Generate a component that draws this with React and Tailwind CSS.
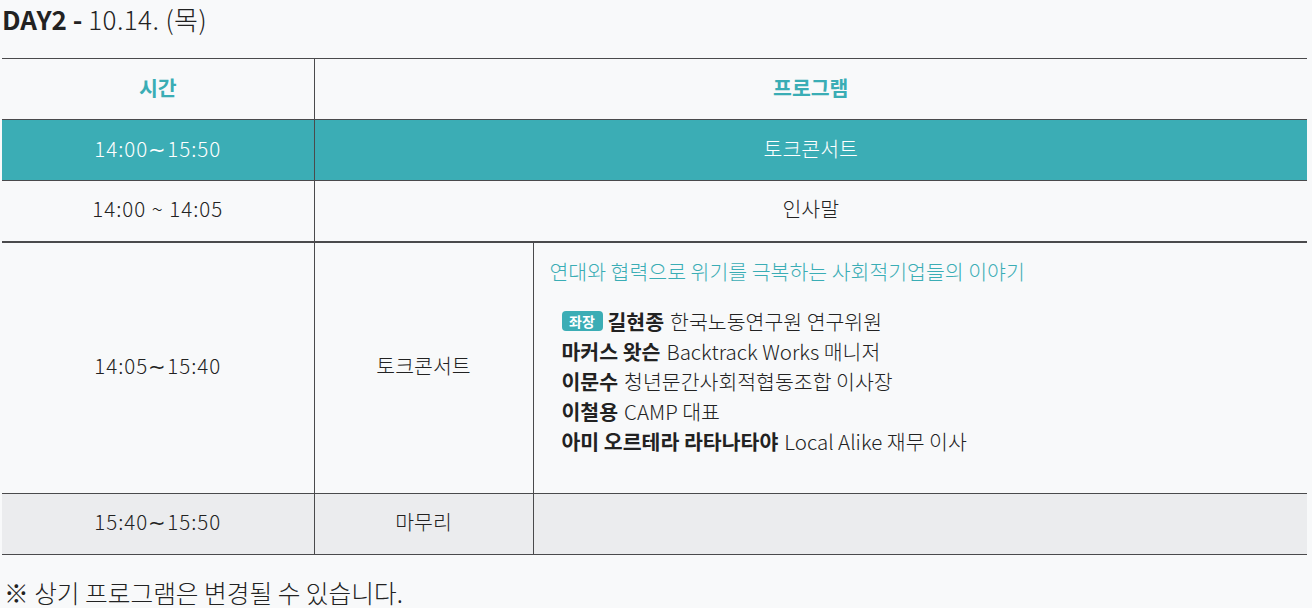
const font = { fontFamily: '"Noto Sans CJK KR", "Noto Sans", sans-serif' };

const speakers = [
  { name: "길현종", role: "한국노동연구원 연구위원", chair: true },
  { name: "마커스 왓슨", role: "Backtrack Works 매니저" },
  { name: "이문수", role: "청년문간사회적협동조합 이사장" },
  { name: "이철용", role: "CAMP 대표" },
  { name: "아미 오르테라 라타나타야", role: "Local Alike 재무 이사" },
];

export default function App() {
  return (
    <div
      className="min-h-[608px] w-[1312px] bg-[#f8f9fa] text-[#222] overflow-hidden"
      style={font}
    >
      {/* Title */}
      <h2 className="h-[58px] pl-[2px] text-[26px] leading-[38px]">
        <span className="font-bold">DAY2 - </span>
        <span className="font-light tracking-[0.4px]">10.14. (목)</span>
      </h2>

      <table className="ml-[2px] w-[1305px] table-fixed border-collapse text-[20.5px]">
        <colgroup>
          <col className="w-[312px]" />
          <col className="w-[219px]" />
          <col />
        </colgroup>
        <thead>
          <tr className="border-t border-[#4a4a4c]">
            <th className="h-[61px] border-r border-[#4a4a4c] pb-1 text-center font-bold text-[#3aadb5]">
              시간
            </th>
            <th colSpan={2} className="h-[61px] pb-1 text-center font-bold text-[#3aadb5]">
              프로그램
            </th>
          </tr>
        </thead>
        <tbody className="font-light">
          <tr className="border-t border-[#4a4a4c] bg-[#3badb5] text-white">
            <td className="h-[61px] border-r border-[#4a4a4c] pb-1 text-center tracking-[1px]">
              14:00∼15:50
            </td>
            <td colSpan={2} className="pb-1 text-center">
              토크콘서트
            </td>
          </tr>
          <tr className="border-t border-b-2 border-[#4a4a4c]">
            <td className="h-[61px] border-r border-[#4a4a4c] pb-1 text-center tracking-[1px]">
              14:00 ~ 14:05
            </td>
            <td colSpan={2} className="pb-1 text-center">
              인사말
            </td>
          </tr>
          <tr className="border-[#4a4a4c]">
            <td className="h-[250px] border-r border-[#4a4a4c] pb-1 text-center tracking-[1px]">
              14:05∼15:40
            </td>
            <td className="border-r border-[#4a4a4c] pb-1 text-center">토크콘서트</td>
            <td className="px-4 pt-[13px] pb-[37px] align-top">
              <p className="leading-[30px] text-[#3aadb5]">
                연대와 협력으로 위기를 극복하는 사회적기업들의 이야기
              </p>
              <ul className="mt-[20px] pl-3">
                {speakers.map((s) => (
                  <li key={s.name} className="flex items-center leading-[30px]">
                    {s.chair && (
                      <span className="mr-[5px] inline-flex h-5 w-[41px] items-center justify-center rounded-[4px] bg-[#3badb5] text-[14px] font-bold leading-none text-white">
                        좌장
                      </span>
                    )}
                    <span className="font-bold">{s.name}</span>
                    <span className="ml-[6px]">{s.role}</span>
                  </li>
                ))}
              </ul>
            </td>
          </tr>
          <tr className="border-t border-b border-[#4a4a4c] bg-[#ebecee]">
            <td className="h-[61px] border-r border-[#4a4a4c] pb-1 text-center tracking-[1px]">
              15:40∼15:50
            </td>
            <td className="border-r border-[#4a4a4c] pb-1 text-center">마무리</td>
            <td></td>
          </tr>
        </tbody>
      </table>

      <p className="mt-[20px] pl-[4px] text-[24.7px] leading-[34px] font-light text-[#222]">
        ※ 상기 프로그램은 변경될 수 있습니다.
      </p>
    </div>
  );
}
